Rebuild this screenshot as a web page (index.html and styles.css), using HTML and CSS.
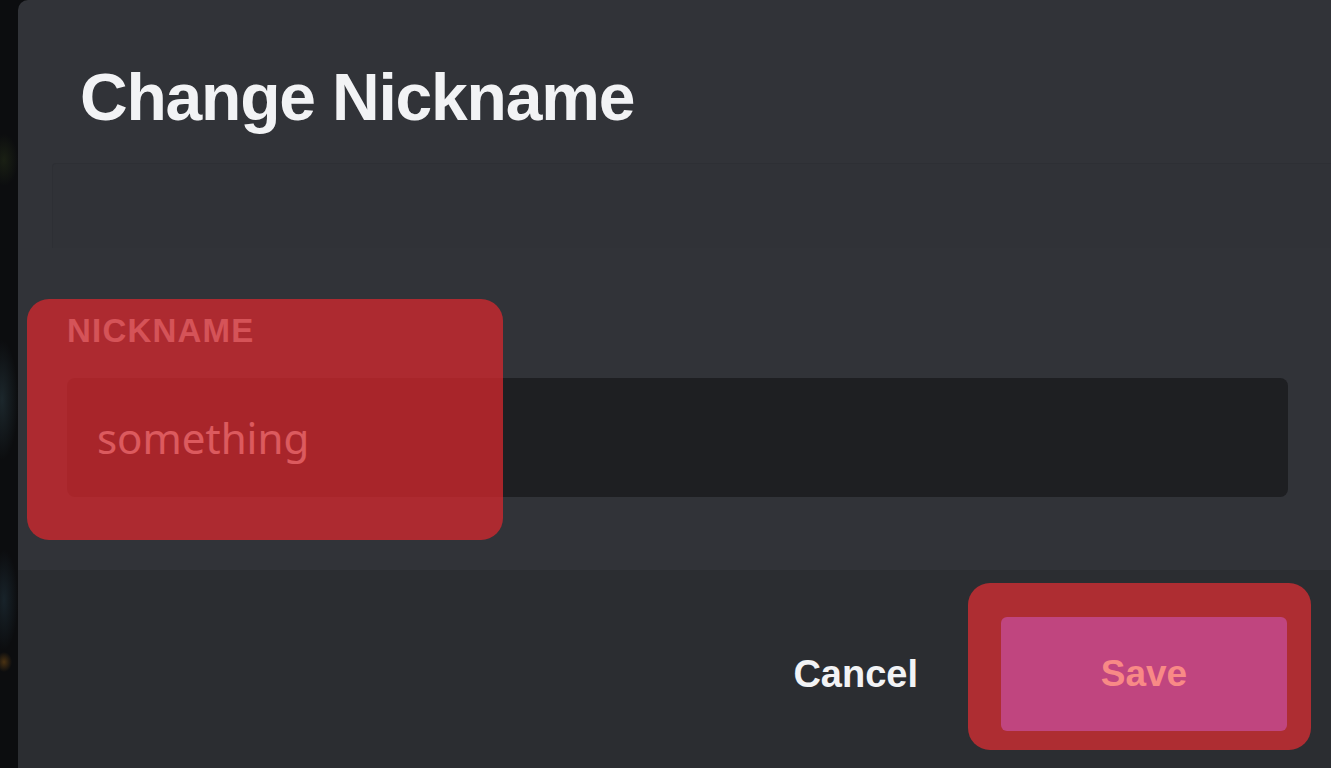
FILE: index.html
```html
<!DOCTYPE html>
<html>

<head>
    <meta charset="utf-8">
    <title>Change Nickname</title>
    <meta name="viewport" content="width=device-width">
    <link rel="stylesheet" href="styles.css">
</head>

<body>
    <div class="backdrop"></div>

    <div class="modal">
        <div class="modal-header">
            <h1>Change Nickname</h1>
        </div>
        <div class="notice"></div>

        <div class="form">
            <div class="highlight nick-highlight"></div>
            <label class="field-label" for="nickname">Nickname</label>
            <div class="input">something</div>
        </div>

        <div class="modal-footer">
            <button class="cancel">Cancel</button>
            <div class="save-highlight">
                <button class="save">Save</button>
            </div>
        </div>
    </div>
</body>

</html>
```

FILE: styles.css
```css
body {
    margin: 0;
    height: 768px;
    overflow: hidden;
    display: flex;
    background-color: #0c0d0f;
    font-family: 'Liberation Sans', Arial, sans-serif;
}

.backdrop {
    width: 18px;
    flex-shrink: 0;
    background:
        radial-gradient(ellipse 14px 26px at 4px 160px, #1a2014 0%, transparent 100%),
        radial-gradient(ellipse 16px 60px at 2px 400px, #1c272c 0%, transparent 100%),
        radial-gradient(ellipse 14px 50px at 4px 600px, #18232a 0%, transparent 100%),
        radial-gradient(ellipse 8px 10px at 4px 662px, #4a3212 0%, transparent 100%),
        #0c0d0f;
}

.modal {
    flex: 1;
    display: flex;
    flex-direction: column;
    background-color: #313338;
    border-top-left-radius: 10px;
}

.modal-header {
    padding: 57px 0 26px 62px;
}

h1 {
    margin: 0;
    color: #f2f3f5;
    font-size: 66px;
    line-height: 80px;
    font-weight: bold;
    letter-spacing: -1.2px;
}

.notice {
    height: 85px;
    margin-left: 34px;
    background-color: #303237;
    border-top: 1px solid #2d2f34;
    border-left: 1px solid #2d2f34;
    border-top-left-radius: 4px;
    box-sizing: border-box;
}

.form {
    position: relative;
    display: flex;
    flex-direction: column;
    padding: 63px 43px 73px 49px;
}

.field-label {
    color: #cdd1d6;
    font-size: 33px;
    line-height: 40px;
    font-weight: bold;
    text-transform: uppercase;
    letter-spacing: 1.2px;
}

.input {
    margin-top: 27px;
    height: 119px;
    display: flex;
    align-items: center;
    padding-left: 30px;
    border-radius: 8px;
    background-color: #1e1f22;
    color: #eceef0;
    font-family: 'Noto Sans', sans-serif;
    font-size: 42px;
}

.nick-highlight {
    position: absolute;
    left: 9px;
    top: 51px;
    width: 476px;
    height: 241px;
    border-radius: 22px;
    background-color: rgba(215, 40, 45, 0.75);
    pointer-events: none;
}

.modal-footer {
    flex: 1;
    display: flex;
    justify-content: flex-end;
    align-items: flex-start;
    padding: 13px 20px 0 0;
    background-color: #2b2d31;
}

button {
    border: none;
    font-family: 'Liberation Sans', Arial, sans-serif;
    font-weight: bold;
    cursor: pointer;
}

.cancel {
    margin-top: 34px;
    margin-right: 50px;
    height: 114px;
    padding: 0;
    background: none;
    color: #f2f3f5;
    font-size: 38px;
}

.save-highlight {
    padding: 34px 24px 19px 33px;
    border-radius: 22px;
    background-color: #ae2d32;
}

.save {
    display: block;
    width: 286px;
    height: 114px;
    border-radius: 6px;
    background-color: #c0457f;
    color: #f88a86;
    font-size: 37px;
}
```
